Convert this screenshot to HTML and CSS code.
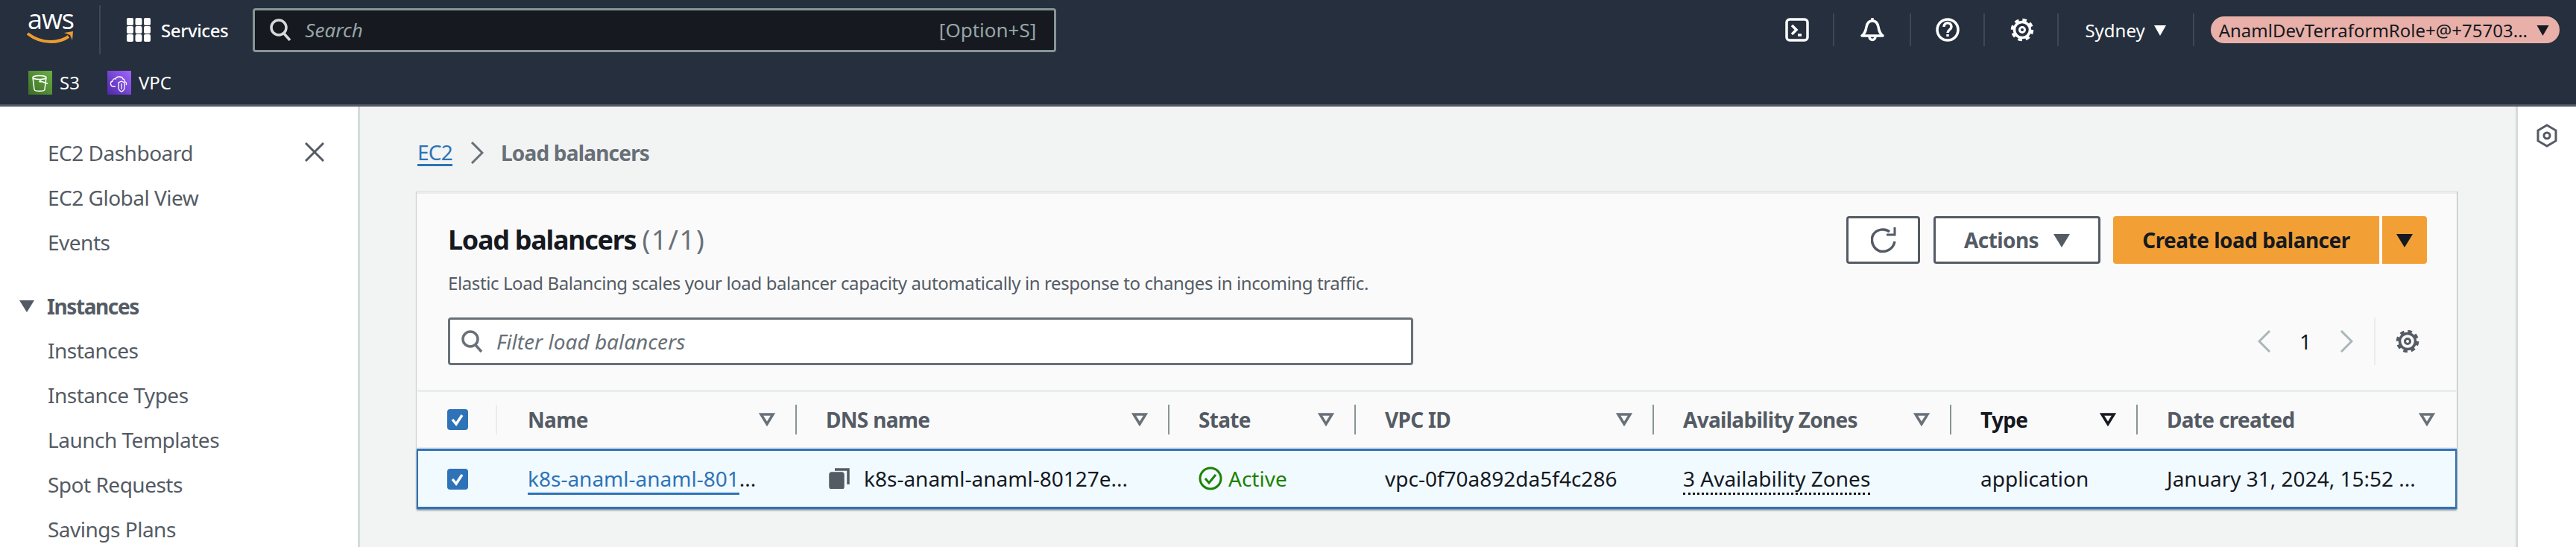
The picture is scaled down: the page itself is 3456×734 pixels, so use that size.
FILE: index.html
```html
<!DOCTYPE html>
<html>
<head>
    <title>Load balancers | EC2</title>
    <link rel="stylesheet" href="styles.css">
</head>
<body>

<!-- Top bar -->
<div class="topbar">
    <div class="topbar-main">
        <div class="aws-logo">
            <span class="aws-word">aws</span>
            <svg class="aws-smile" viewBox="0 0 64 22" width="64" height="22">
                <path d="M1 4c9 7 19 11 31 11 8 0 17-2 24-7" fill="none" stroke="#ec9c30" stroke-width="4"/>
                <path d="M50 3l12-2-1 12-3-7z" fill="#ec9c30"/>
            </svg>
        </div>
        <div class="services">
            <svg viewBox="0 0 32 32" width="32" height="32" fill="#fff">
                <rect x="0" y="0" width="9" height="10" rx="2"/><rect x="11.500" y="0" width="9" height="10" rx="2"/><rect x="23" y="0" width="9" height="10" rx="2"/>
                <rect x="0" y="11" width="9" height="10" rx="2"/><rect x="11.500" y="11" width="9" height="10" rx="2"/><rect x="23" y="11" width="9" height="10" rx="2"/>
                <rect x="0" y="22" width="9" height="10" rx="2"/><rect x="11.500" y="22" width="9" height="10" rx="2"/><rect x="23" y="22" width="9" height="10" rx="2"/>
            </svg>
            <span>Services</span>
        </div>
        <div class="top-search">
            <svg viewBox="0 0 30 30" width="30" height="30" fill="none" stroke="#d5dbdb" stroke-width="3.500">
                <circle cx="13" cy="12" r="10"/><path d="M20 20l8 9"/>
            </svg>
            <span class="top-search-text">Search</span>
            <span class="top-search-key">[Option+S]</span>
        </div>
        <div class="top-tools">
            <div class="tool tool-shell">
                <svg viewBox="0 0 32 32" width="32" height="32" fill="none" stroke="#fff" stroke-width="3.500">
                    <rect x="2" y="2" width="28" height="28" rx="4"/><path d="M9 10l6 6-6 6"/><path d="M17 23h5"/>
                </svg>
            </div>
            <div class="tool tool-bell">
                <svg viewBox="0 0 34 32" width="34" height="32" fill="none" stroke="#fff" stroke-width="3.500">
                    <path d="M3 24c4-3 5-6 6-12 1-5 4-8 8-8s7 3 8 8c1 6 2 9 6 12z" stroke-linejoin="round"/><path d="M17 0v4"/><path d="M13 25c0 6 8 6 8 0"/>
                </svg>
            </div>
            <div class="tool tool-help">
                <svg viewBox="0 0 32 32" width="32" height="32" fill="none" stroke="#fff" stroke-width="3.500">
                    <circle cx="16" cy="16" r="14"/><path d="M11 12c0-7 10-7 10 0 0 4-5 4-5 8"/><path d="M16 22v3"/>
                </svg>
            </div>
            <div class="tool tool-gear">
                <svg viewBox="0 0 32 32" width="32" height="32" fill="none" stroke="#fff">
                    <circle cx="16" cy="16" r="10.500" stroke-width="3.500"/>
                    <circle cx="16" cy="16" r="13.500" stroke-width="3.500" stroke-dasharray="5.600 5"/>
                    <circle cx="16" cy="16" r="3.500" stroke-width="3"/>
                </svg>
            </div>
            <div class="tool tool-region">
                <span>Sydney</span>
                <svg viewBox="0 0 16 16" width="16" height="16"><path d="M0 2h16l-8 14z" fill="#fff"/></svg>
            </div>
            <div class="account">
                <span>AnamlDevTerraformRole+@+75703...</span>
                <svg viewBox="0 0 16 16" width="17" height="16"><path d="M0 2h16l-8 14z" fill="#16191f"/></svg>
            </div>
        </div>
    </div>
    <div class="topbar-pins">
        <div class="pin">
            <svg class="pin-icon pin-s3" viewBox="0 0 32 32" width="32" height="32" fill="none" stroke="#fff" stroke-width="1.500">
                <ellipse cx="15" cy="9" rx="9" ry="2.500"/><path d="M6 9l2 16c0 3 14 3 14 0l2-16"/><circle cx="16" cy="14" r="1"/><path d="M16 14l10 3"/>
            </svg>
            <span>S3</span>
        </div>
        <div class="pin">
            <svg class="pin-icon pin-vpc" viewBox="0 0 32 32" width="32" height="32" fill="none" stroke="#fff" stroke-width="1.300">
                <path d="M11 21H8c-4 0-5-6-1-7 0-3 3-4 4-3 1-4 9-4 10 0 1 0 2 1 2 3 3 1 3 4 2 5"/>
                <path d="M19 14l4 2v7c0 3-2 4-4 5-2-1-4-2-4-5v-7z"/><path d="M19 17v8"/>
            </svg>
            <span>VPC</span>
        </div>
    </div>
</div>

<div class="page">

    <!-- Sidebar -->
    <div class="sidebar">
        <svg class="sidebar-close" viewBox="0 0 26 26" width="26" height="26" fill="none" stroke="#545b64" stroke-width="3">
            <path d="M1 1l24 24M25 1L1 25"/>
        </svg>
        <a href="#">EC2 Dashboard</a>
        <a href="#">EC2 Global View</a>
        <a href="#">Events</a>
        <div class="nav-group">
            <svg viewBox="0 0 20 16" width="20" height="16"><path d="M0 0h20l-10 16z" fill="#545b64"/></svg>
            <span>Instances</span>
        </div>
        <a href="#">Instances</a>
        <a href="#">Instance Types</a>
        <a href="#">Launch Templates</a>
        <a href="#">Spot Requests</a>
        <a href="#">Savings Plans</a>
    </div>

    <!-- Page Content -->
    <div class="content">
        <div class="breadcrumb">
            <a href="#">EC2</a>
            <svg viewBox="0 0 18 30" width="18" height="30" fill="none" stroke="#687078" stroke-width="3"><path d="M2 1l14 14L2 29"/></svg>
            <span>Load balancers</span>
        </div>

        <div class="card">
            <div class="card-head">
                <div class="card-title">
                    <h1>Load balancers <span class="count">(1/1)</span></h1>
                    <p>Elastic Load Balancing scales your load balancer capacity automatically in response to changes in incoming traffic.</p>
                </div>
                <div class="card-actions">
                    <div class="btn btn-refresh">
                        <svg viewBox="0 0 34 34" width="34" height="34" fill="none" stroke="#545b64" stroke-width="3.500">
                            <path d="M25 6C19 1 8 2 3 10c-4 8 0 19 9 22 9 2 18-3 20-13"/><path d="M21 10h11V0" stroke-width="3"/>
                        </svg>
                    </div>
                    <div class="btn btn-actions">
                        <span>Actions</span>
                        <svg viewBox="0 0 22 20" width="22" height="20"><path d="M0 2h22l-11 18z" fill="#545b64"/></svg>
                    </div>
                    <div class="btn-create">Create load balancer</div>
                    <div class="btn-create-arrow">
                        <svg viewBox="0 0 22 20" width="22" height="20"><path d="M0 2h22l-11 18z" fill="#16191f"/></svg>
                    </div>
                </div>
            </div>

            <div class="filter-row">
                <div class="filter-input">
                    <svg viewBox="0 0 30 30" width="30" height="30" fill="none" stroke="#687078" stroke-width="3.500">
                        <circle cx="13" cy="12" r="10"/><path d="M20 20l8 9"/>
                    </svg>
                    <span>Filter load balancers</span>
                </div>
                <div class="pager">
                    <svg viewBox="0 0 18 30" width="18" height="30" fill="none" stroke="#aab7b8" stroke-width="3"><path d="M16 1L2 15l14 14"/></svg>
                    <span class="pager-num">1</span>
                    <svg viewBox="0 0 18 30" width="18" height="30" fill="none" stroke="#aab7b8" stroke-width="3"><path d="M2 1l14 14L2 29"/></svg>
                    <div class="pager-gear">
                        <svg viewBox="0 0 32 32" width="32" height="32" fill="none" stroke="#545b64">
                            <circle cx="16" cy="16" r="10.500" stroke-width="3.500"/>
                            <circle cx="16" cy="16" r="13.500" stroke-width="3.500" stroke-dasharray="5.600 5"/>
                            <circle cx="16" cy="16" r="3.500" stroke-width="3"/>
                        </svg>
                    </div>
                </div>
            </div>

            <div class="table-head">
                <div class="th th-check"><span class="check"><svg viewBox="0 0 28 28" width="28" height="28" fill="none" stroke="#fff" stroke-width="3.500"><path d="M7 14l5 6 8-12"/></svg></span></div>
                <div class="th th-first"><span>Name</span><svg class="sort" viewBox="0 0 22 18" width="22" height="18"><path d="M3 2h16l-8 13z" fill="none" stroke="#687078" stroke-width="3.500"/></svg></div>
                <div class="th"><span>DNS name</span><svg class="sort" viewBox="0 0 22 18" width="22" height="18"><path d="M3 2h16l-8 13z" fill="none" stroke="#687078" stroke-width="3.500"/></svg></div>
                <div class="th"><span>State</span><svg class="sort" viewBox="0 0 22 18" width="22" height="18"><path d="M3 2h16l-8 13z" fill="none" stroke="#687078" stroke-width="3.500"/></svg></div>
                <div class="th"><span>VPC ID</span><svg class="sort" viewBox="0 0 22 18" width="22" height="18"><path d="M3 2h16l-8 13z" fill="none" stroke="#687078" stroke-width="3.500"/></svg></div>
                <div class="th"><span>Availability Zones</span><svg class="sort" viewBox="0 0 22 18" width="22" height="18"><path d="M3 2h16l-8 13z" fill="none" stroke="#687078" stroke-width="3.500"/></svg></div>
                <div class="th th-active"><span>Type</span><svg class="sort" viewBox="0 0 22 18" width="22" height="18"><path d="M3 2h16l-8 13z" fill="none" stroke="#16191f" stroke-width="3.500"/></svg></div>
                <div class="th"><span>Date created</span><svg class="sort" viewBox="0 0 22 18" width="22" height="18"><path d="M3 2h16l-8 13z" fill="none" stroke="#687078" stroke-width="3.500"/></svg></div>
            </div>

            <div class="table-row">
                <div class="td"><span class="check"><svg viewBox="0 0 28 28" width="28" height="28" fill="none" stroke="#fff" stroke-width="3.500"><path d="M7 14l5 6 8-12"/></svg></span></div>
                <div class="td"><a href="#">k8s-anaml-anaml-801</a>...</div>
                <div class="td td-dns">
                    <svg viewBox="0 0 28 28" width="28" height="28" fill="none" stroke="#545b64" stroke-width="3.500">
                        <rect x="2" y="7" width="17" height="20" rx="2" fill="#545b64"/><path d="M8 2h18v20"/>
                    </svg>
                    k8s-anaml-anaml-80127e...
                </div>
                <div class="td td-state">
                    <svg viewBox="0 0 32 32" width="32" height="32" fill="none" stroke="#1d8102" stroke-width="3">
                        <circle cx="16" cy="16" r="14"/><path d="M9 16l5 6 9-11"/>
                    </svg>
                    Active
                </div>
                <div class="td">vpc-0f70a892da5f4c286</div>
                <div class="td"><span class="dotted">3 Availability Zones</span></div>
                <div class="td">application</div>
                <div class="td">January 31, 2024, 15:52 ...</div>
            </div>
        </div>
    </div>

    <!-- Right rail -->
    <div class="rail">
        <svg viewBox="0 0 30 32" width="30" height="32" fill="none" stroke="#545b64" stroke-width="3">
            <path d="M15 2l12 7v14l-12 7-12-7V9z"/><circle cx="15" cy="16" r="4"/>
        </svg>
    </div>
</div>

</body>
</html>
```

FILE: styles.css
```css
* {
    box-sizing: border-box;
}

html, body {
    margin: 0;
    height: 734px;
    overflow: hidden;
}

body {
    font-family: "Noto Sans", "Open Sans", sans-serif;
    font-size: 28px;
    color: #16191f;
    background-color: #f2f3f3;
}

a {
    text-decoration: none;
}

/* Top bar */
.topbar {
    height: 143px;
    background-color: #252f3e;
    border-bottom: 3px solid #545b64;
    color: white;
}

.topbar-main {
    height: 80px;
    display: flex;
    align-items: center;
    padding-left: 36px;
    padding-right: 22px;
}

.aws-logo {
    width: 64px;
    height: 44px;
    position: relative;
    margin-top: 2px;
}

.aws-word {
    display: block;
    font-family: "Open Sans", sans-serif;
    font-size: 36px;
    line-height: 30px;
    letter-spacing: -1px;
    text-align: center;
    margin-top: -8px;
}

.aws-smile {
    display: block;
}

.services {
    display: flex;
    align-items: center;
    gap: 14px;
    margin-left: 33px;
    padding-left: 35px;
    height: 66px;
    border-left: 2px solid #414750;
    font-size: 24px;
    font-weight: 500;
    letter-spacing: -0.4px;
}

.top-search {
    display: flex;
    align-items: center;
    width: 1078px;
    height: 59px;
    margin-left: 33px;
    padding-left: 19px;
    padding-right: 24px;
    background-color: #16191f;
    border: 3px solid #879596;
    border-radius: 4px;
    color: #95a5a6;
    font-size: 26px;
}

.top-search-text {
    font-style: italic;
    margin-left: 18px;
    flex: 1;
}

.top-tools {
    display: flex;
    align-items: center;
    margin-left: auto;
    height: 44px;
}

.tool {
    height: 44px;
    display: flex;
    align-items: center;
    border-right: 2px solid #414750;
}

.tool-shell { padding-right: 32px; }
.tool-bell { padding-left: 34px; padding-right: 33px; }
.tool-help { padding-left: 33px; padding-right: 32px; }
.tool-gear { padding-left: 34px; padding-right: 31px; }

.tool-region {
    padding-left: 35px;
    padding-right: 36px;
    gap: 12px;
    font-size: 24px;
}

.account {
    display: flex;
    align-items: center;
    gap: 12px;
    height: 36px;
    margin-left: 22px;
    padding-left: 11px;
    padding-right: 14px;
    border-radius: 18px;
    background-color: #e8b0a8;
    color: #16191f;
    font-size: 24px;
}

.topbar-pins {
    display: flex;
    gap: 37px;
    padding-left: 38px;
    padding-top: 14px;
}

.pin {
    display: flex;
    align-items: center;
    gap: 10px;
    font-size: 24px;
}

.pin-icon {
    display: block;
}

.pin-s3 { background: linear-gradient(45deg, #3c6e26, #6aae45); }
.pin-vpc { background: linear-gradient(45deg, #4d27a8, #a166ff); }

/* Page */
.page {
    display: flex;
    height: 591px;
}

/* Sidebar */
.sidebar {
    width: 483px;
    flex: none;
    position: relative;
    padding-top: 33px;
    background-color: white;
    border-right: 3px solid #d5dbdb;
}

.sidebar a, .nav-group {
    display: block;
    height: 60px;
    line-height: 59px;
    padding-left: 64px;
    color: #545b64;
    white-space: nowrap;
    letter-spacing: -0.5px;
}

.nav-group {
    display: flex;
    align-items: center;
    margin-top: 25px;
    padding-left: 26px;
    gap: 17px;
    font-weight: 700;
    letter-spacing: -1.4px;
}

.sidebar-close {
    position: absolute;
    left: 409px;
    top: 48px;
}

/* Content */
.content {
    flex: 1;
    padding-left: 76px;
    padding-right: 79px;
}

.breadcrumb {
    display: flex;
    align-items: center;
    height: 114px;
    padding-left: 1px;
    padding-top: 10px;
    color: #687078;
    font-weight: 700;
    letter-spacing: -0.8px;
}

.breadcrumb a {
    color: #2e73b8;
    font-weight: 400;
    border-bottom: 3px solid #2e73b8;
    line-height: 32px;
}

.breadcrumb svg {
    margin-left: 24px;
    margin-right: 23px;
}

.card {
    background-color: #fafafa;
    border-top: 3px solid #eaeded;
    box-shadow: 1px 0 1px rgba(0, 28, 36, 0.25), -1px 0 1px rgba(0, 28, 36, 0.15);
}

.card-head {
    display: flex;
    justify-content: space-between;
    height: 166px;
    padding-top: 30px;
    padding-left: 42px;
    padding-right: 40px;
}

.card-title {
    padding-top: 10px;
}

.card-title h1 {
    margin: 0;
    font-size: 36px;
    line-height: 44px;
    font-weight: 700;
    letter-spacing: -1.3px;
}

.count {
    font-weight: 400;
    letter-spacing: 1.800px;
    color: #687078;
}

.card-title p {
    margin: 20px 0 0;
    font-size: 24px;
    line-height: 32px;
    color: #545b64;
    letter-spacing: -0.4px;
}

.card-actions {
    display: flex;
    height: 64px;
}

.btn {
    display: flex;
    align-items: center;
    justify-content: center;
    height: 64px;
    background-color: white;
    border: 3px solid #545b64;
    border-radius: 4px;
    color: #545b64;
    font-weight: 700;
    letter-spacing: -0.6px;
}

.btn-refresh {
    width: 99px;
}

.btn-actions {
    width: 224px;
    margin-left: 18px;
    margin-right: 17px;
    gap: 20px;
}

.btn-create {
    width: 357px;
    height: 64px;
    line-height: 64px;
    text-align: center;
    background-color: #f2a036;
    border-radius: 4px 0 0 4px;
    font-weight: 700;
    letter-spacing: -0.5px;
}

.btn-create-arrow {
    width: 60px;
    height: 64px;
    margin-left: 4px;
    display: flex;
    align-items: center;
    justify-content: center;
    background-color: #f2a036;
    border-radius: 0 4px 4px 0;
}

.filter-row {
    display: flex;
    justify-content: space-between;
    align-items: center;
    height: 64px;
    margin-bottom: 33px;
    padding-left: 42px;
    padding-right: 50px;
}

.filter-input {
    display: flex;
    align-items: center;
    gap: 18px;
    width: 1295px;
    height: 64px;
    padding-left: 14px;
    background-color: white;
    border: 3px solid #687078;
    border-radius: 4px;
    color: #687078;
    font-style: italic;
}

.pager {
    display: flex;
    align-items: center;
    height: 64px;
}

.pager-num {
    width: 92px;
    text-align: center;
}

.pager-gear {
    display: flex;
    align-items: center;
    height: 64px;
    margin-left: 28px;
    padding-left: 27px;
    border-left: 2px solid #eaeded;
}

/* Table */
.table-head, .table-row {
    display: grid;
    grid-template-columns: 106px 400px 500px 250px 400px 399px 250px 1fr;
    border-left: 2px solid transparent;
    border-right: 2px solid transparent;
}

.table-head {
    height: 79px;
    border-top: 3px solid #eaeded;
    border-bottom: 2px solid #eaeded;
    align-items: center;
}

.th {
    display: flex;
    align-items: center;
    justify-content: space-between;
    height: 40px;
    padding-left: 39px;
    padding-right: 27px;
    border-left: 2px solid #879596;
    color: #545b64;
    font-weight: 700;
    letter-spacing: -0.7px;
}

.th-check {
    border-left: none;
    padding-left: 39px;
    border-right: 2px solid #eaeded;
}

.th-first {
    border-left: none;
    padding-left: 41px;
}

.th-active {
    color: #16191f;
}

.sort {
    display: block;
}

.check {
    display: block;
    width: 28px;
    height: 28px;
    border-radius: 4px;
    background-color: #2e73b8;
}

.check svg {
    display: block;
}

.table-row {
    height: 81px;
    align-items: center;
    background-color: #f1faff;
    border: 3px solid #2e73b8;
    border-left-width: 2px;
    border-right-width: 2px;
    box-shadow: 0 2px 2px rgba(0, 28, 36, 0.4);
}

.td {
    padding-left: 41px;
    padding-bottom: 2px;
    white-space: nowrap;
}

.td:first-child {
    padding-left: 39px;
    padding-bottom: 0;
}

.td a {
    color: #2e73b8;
    border-bottom: 3px solid #2e73b8;
}

.td-dns, .td-state {
    display: flex;
    align-items: center;
}

.td-dns {
    gap: 19px;
    padding-left: 45px;
}

.td-state {
    gap: 8px;
    color: #1d8102;
}

.dotted {
    border-bottom: 3px dotted #16191f;
}

/* Right rail */
.rail {
    width: 81px;
    flex: none;
    padding-top: 23px;
    text-align: center;
    background-color: white;
    border-left: 3px solid #d5dbdb;
}
```
